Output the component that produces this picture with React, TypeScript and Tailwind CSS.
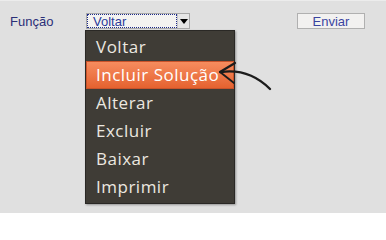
import React from "react";

const OPTIONS = ["Voltar", "Incluir Solução", "Alterar", "Excluir", "Baixar", "Imprimir"];

function CurvedArrow() {
  return (
    <svg
      className="pointer-events-none absolute left-[214px] top-[56px]"
      width="64"
      height="40"
      viewBox="0 0 64 40"
      fill="none"
    >
      {/* shaft */}
      <path
        d="M7 15 C 22 13, 40 16, 56 32"
        stroke="#1c1c1c"
        strokeWidth="2.4"
        strokeLinecap="round"
      />
      {/* head */}
      <path d="M6 15 L 21 6" stroke="#1c1c1c" strokeWidth="2.2" strokeLinecap="round" />
      <path d="M6 15 L 20 26" stroke="#1c1c1c" strokeWidth="1.8" strokeLinecap="round" />
    </svg>
  );
}

export default function App() {
  return (
    <div className="relative h-[213px] w-[386px] overflow-hidden border-t border-[#ececec] bg-[#e0e0e0] font-['Liberation_Sans',Arial,sans-serif] text-[13px]">
      <div className="flex items-start pl-[10px] pt-[12px]">
        <span className="w-[76px] pt-[1px] leading-[15px] text-[#2b2f78]">Função</span>

        {/* Select */}
        <div className="relative flex h-[16px] w-[104px] border border-[#a8a8a8] bg-[#f4f3f1]">
          <div className="flex flex-1 items-center border border-dotted border-[#1d2a8a] pl-[5px] leading-none text-[#2b3a9a]">
            Voltar
          </div>
          <div className="flex w-[12px] items-center justify-center border-l border-[#c8c8c8] bg-[#e6e6e6]">
            <span className="block h-0 w-0 border-x-[4px] border-t-[5px] border-x-transparent border-t-black" />
          </div>
        </div>

        <button className="ml-[107px] h-[16px] w-[68px] border border-[#b0b0b0] bg-[#f2f1f0] text-[13px] leading-none text-[#3a44a0]">
          Enviar
        </button>
      </div>

      {/* Open dropdown list */}
      <ul className="absolute left-[85px] top-[29px] w-[150px] border border-[#2a2825] bg-[#3f3c36] py-[2px] font-['Open_Sans','Noto_Sans',sans-serif] text-[17px] tracking-[0.5px] text-[#ece8e0] shadow-[1px_1px_2px_rgba(0,0,0,0.35)]">
        {OPTIONS.map((o, i) => (
          <li
            key={o}
            className={
              i === 1
                ? "flex h-[28px] items-center whitespace-nowrap border border-[#c9532a] bg-gradient-to-b from-[#f68c5e] to-[#e5622f] pl-[9px] text-white"
                : "flex h-[28px] items-center whitespace-nowrap pl-[10px]"
            }
          >
            {o}
          </li>
        ))}
      </ul>

      <CurvedArrow />
    </div>
  );
}
